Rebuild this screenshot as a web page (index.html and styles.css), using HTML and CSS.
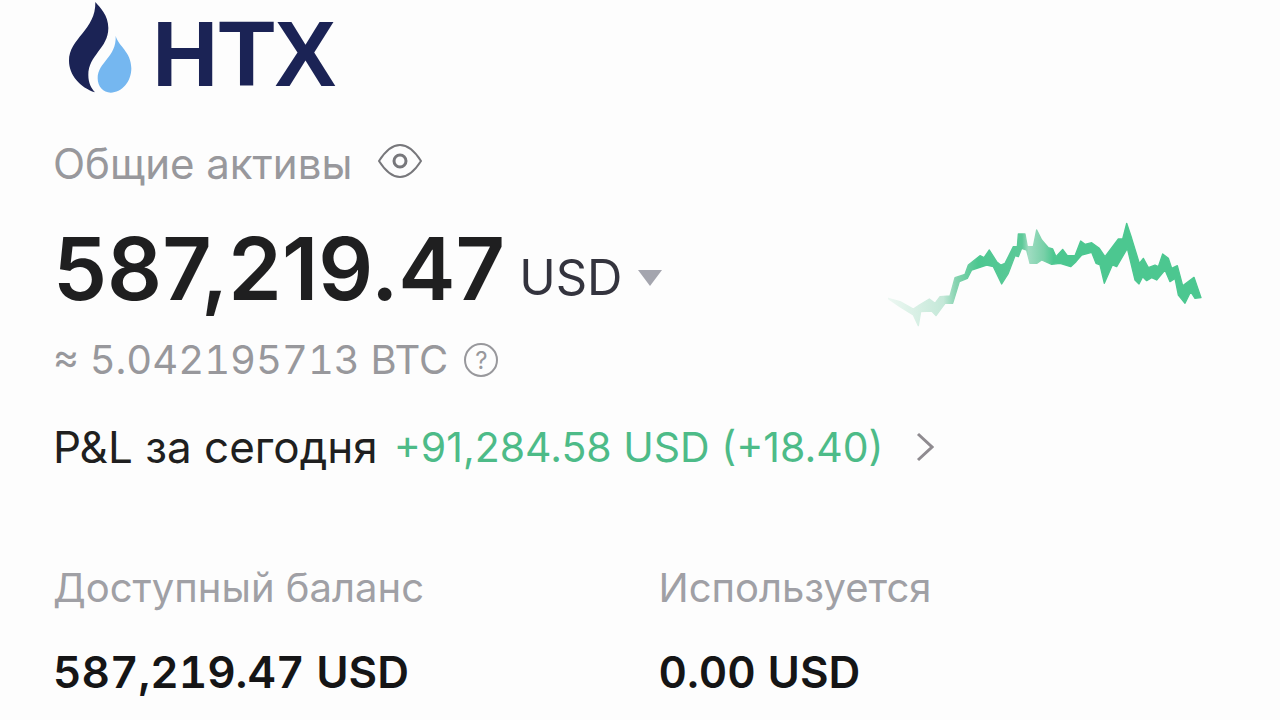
FILE: index.html
```html
<!DOCTYPE html>
<html lang="ru">

<head>
    <meta charset="UTF-8">
    <meta name="viewport" content="width=device-width, initial-scale=1.0">
    <title>HTX</title>
    <link rel="stylesheet" href="styles.css">
</head>

<body>
    <main class="wallet">
        <header class="brand">
            <svg class="brand-logo" viewBox="84 6 192 312" aria-hidden="true">
                <path fill="#1b2355" d="M166 6C180 22 205 46 205 84C205 145 145 165 145 225C145 250 154 264 165 277C120 262 87 225 87 182C87 115 168 90 166 6z" />
                <path fill="#75b7f0" d="M227 108C235 138 274 156 274 205C274 246 245 278 212 278C190 278 173 260 173 235C173 186 230 172 227 108z" />
            </svg>
            <span class="brand-name">HTX</span>
        </header>

        <section class="assets">
            <div class="assets-title">
                <h1>Общие активы</h1>
                <button class="icon-button" type="button" aria-label="Скрыть баланс">
                    <svg class="eye" viewBox="0 0 44 34" fill="none" stroke="#77777b" aria-hidden="true">
                        <path stroke-width="2" d="M1 17C8 6 14 1 22 1C30 1 36 6 43 17C36 28 30 33 22 33C14 33 8 28 1 17z" />
                        <circle cx="22" cy="17" r="6" stroke-width="3" />
                    </svg>
                </button>
            </div>

            <div class="total">
                <span class="total-amount">587,219.47</span>
                <label class="currency">
                    <select aria-label="Валюта">
                        <option>USD</option>
                    </select>
                    <svg class="arrow" viewBox="0 0 26 16" aria-hidden="true">
                        <path fill="#a4a5ae" d="M1 0H25L13 16z" />
                    </svg>
                </label>
                <svg class="chart" viewBox="24 -12 942 348" aria-hidden="true">
                    <defs>
                        <linearGradient id="fade" gradientUnits="userSpaceOnUse" x1="20" y1="0" x2="965" y2="0">
                            <stop offset="0" stop-color="#eef8f3" />
                            <stop offset="0.18" stop-color="#c4e8d8" />
                            <stop offset="0.22" stop-color="#86d3b0" />
                            <stop offset="0.29" stop-color="#4cc790" />
                            <stop offset="0.43" stop-color="#5cc998" />
                            <stop offset="0.45" stop-color="#a0dcc2" />
                            <stop offset="0.5" stop-color="#78d0a8" />
                            <stop offset="0.53" stop-color="#4cc790" />
                        </linearGradient>
                    </defs>
                    <path fill="url(#fade)" stroke="url(#fade)" stroke-width="4" stroke-linejoin="round" d="M24 250L60 260L100 282L118 270L148 252L165 265L180 245L210 243L225 188L255 178L265 150L300 122L312 128L328 105L350 140L362 150L375 145L400 95L412 95L415 57L435 57L442 95L460 95L470 45L485 75L505 98L518 102L528 125L548 103L562 122L585 122L602 78L615 88L635 83L658 100L675 125L715 72L728 72L740 25L755 70L778 145L790 130L805 158L825 150L835 155L848 117L865 130L875 160L892 152L908 212L942 187L963 248L945 250L932 230L915 265L895 240L885 190L870 200L855 165L830 195L815 188L800 197L788 185L777 207L765 195L742 100L710 155L697 150L673 205L660 150L648 145L635 112L605 120L588 140L572 155L540 145L515 148L485 135L470 145L450 145L440 105L425 100L415 125L405 122L385 175L365 207L340 155L320 150L275 165L262 190L238 200L218 265L195 265L168 302L155 288L122 290L115 332L100 300L60 275z" />
                </svg>
            </div>

            <div class="converted">
                <span>≈ 5.042195713 BTC</span>
                <button class="icon-button help" type="button" aria-label="Справка">?</button>
            </div>

            <a class="pnl" href="#">
                <span class="pnl-label">P&amp;L за сегодня</span>
                <span class="pnl-value">+91,284.58 USD (+18.40)</span>
                <svg class="chevron" viewBox="0 0 18 30" fill="none" stroke="#8f8b90" stroke-width="3" aria-hidden="true">
                    <path d="M2 2L16 15L2 28" />
                </svg>
            </a>
        </section>

        <dl class="balances">
            <div>
                <dt>Доступный баланс</dt>
                <dd>587,219.47 USD</dd>
            </div>
            <div>
                <dt>Используется</dt>
                <dd>0.00 USD</dd>
            </div>
        </dl>
    </main>
</body>

</html>
```

FILE: styles.css
```css
* {
    box-sizing: border-box;
}

body {
    margin: 0;
    background-color: #fdfdfd;
    color: #1f1f20;
    font-family: Inter, "Liberation Sans", sans-serif;
    font-size: 42px;
    line-height: 48px;
    white-space: nowrap;
}

.wallet {
    padding: 2px 16px 24px 53px;
}

.brand {
    display: flex;
    align-items: center;
    gap: 20px;
    padding-left: 15px;
}

.brand-logo {
    width: 64px;
    height: 104px;
}

.brand-name {
    color: #1b2355;
    font-family: "Liberation Sans", Arial, sans-serif;
    font-size: 92px;
    font-weight: 700;
    line-height: 104px;
}

.assets-title {
    display: flex;
    align-items: flex-start;
    gap: 26px;
    margin-top: 34px;
    color: #98989c;
}

h1 {
    margin: 0;
    font-size: 42px;
    font-weight: 400;
}

.icon-button {
    display: flex;
    align-items: center;
    justify-content: center;
    padding: 0;
    border: none;
    background: none;
    color: inherit;
    font-family: inherit;
    cursor: pointer;
}

.assets-title .icon-button {
    padding-top: 4px;
}

.eye {
    width: 44px;
    height: 34px;
}

.total {
    display: flex;
    align-items: center;
    margin-top: 23px;
}

.total-amount {
    font-size: 86px;
    font-weight: 600;
    line-height: 116px;
}

.currency {
    display: flex;
    align-items: center;
    gap: 14px;
    margin-left: 14px;
    padding-top: 18px;
}

.currency select {
    appearance: none;
    padding: 0;
    border: none;
    background: none;
    color: #34343e;
    font-family: inherit;
    font-size: 49px;
    line-height: 56px;
    cursor: pointer;
}

.arrow {
    width: 26px;
    height: 16px;
}

.chart {
    width: 314px;
    height: 116px;
    margin-left: auto;
    margin-right: 62px;
}

.converted {
    display: flex;
    align-items: center;
    gap: 16px;
    margin-top: 9px;
    color: #98989c;
    font-size: 40px;
    font-variant-numeric: tabular-nums;
}

.help {
    width: 34px;
    height: 34px;
    border: 2px solid #98989c;
    border-radius: 50%;
    font-size: 24px;
}

.pnl {
    display: flex;
    align-items: center;
    gap: 16px;
    margin-top: 39px;
    color: inherit;
    text-decoration: none;
}

.pnl-label {
    font-size: 44px;
}

.pnl-value {
    color: #4dbb88;
    font-size: 41px;
}

.chevron {
    width: 18px;
    height: 30px;
    margin-left: 16px;
}

.balances {
    display: grid;
    grid-template-columns: 1fr 1fr;
    margin: 93px 0 0;
}

.balances dt {
    color: #a0a0a5;
    font-size: 40px;
}

.balances dd {
    margin: 36px 0 0;
    color: #151516;
    font-size: 44px;
    font-weight: 600;
    font-variant-numeric: tabular-nums;
}
```
